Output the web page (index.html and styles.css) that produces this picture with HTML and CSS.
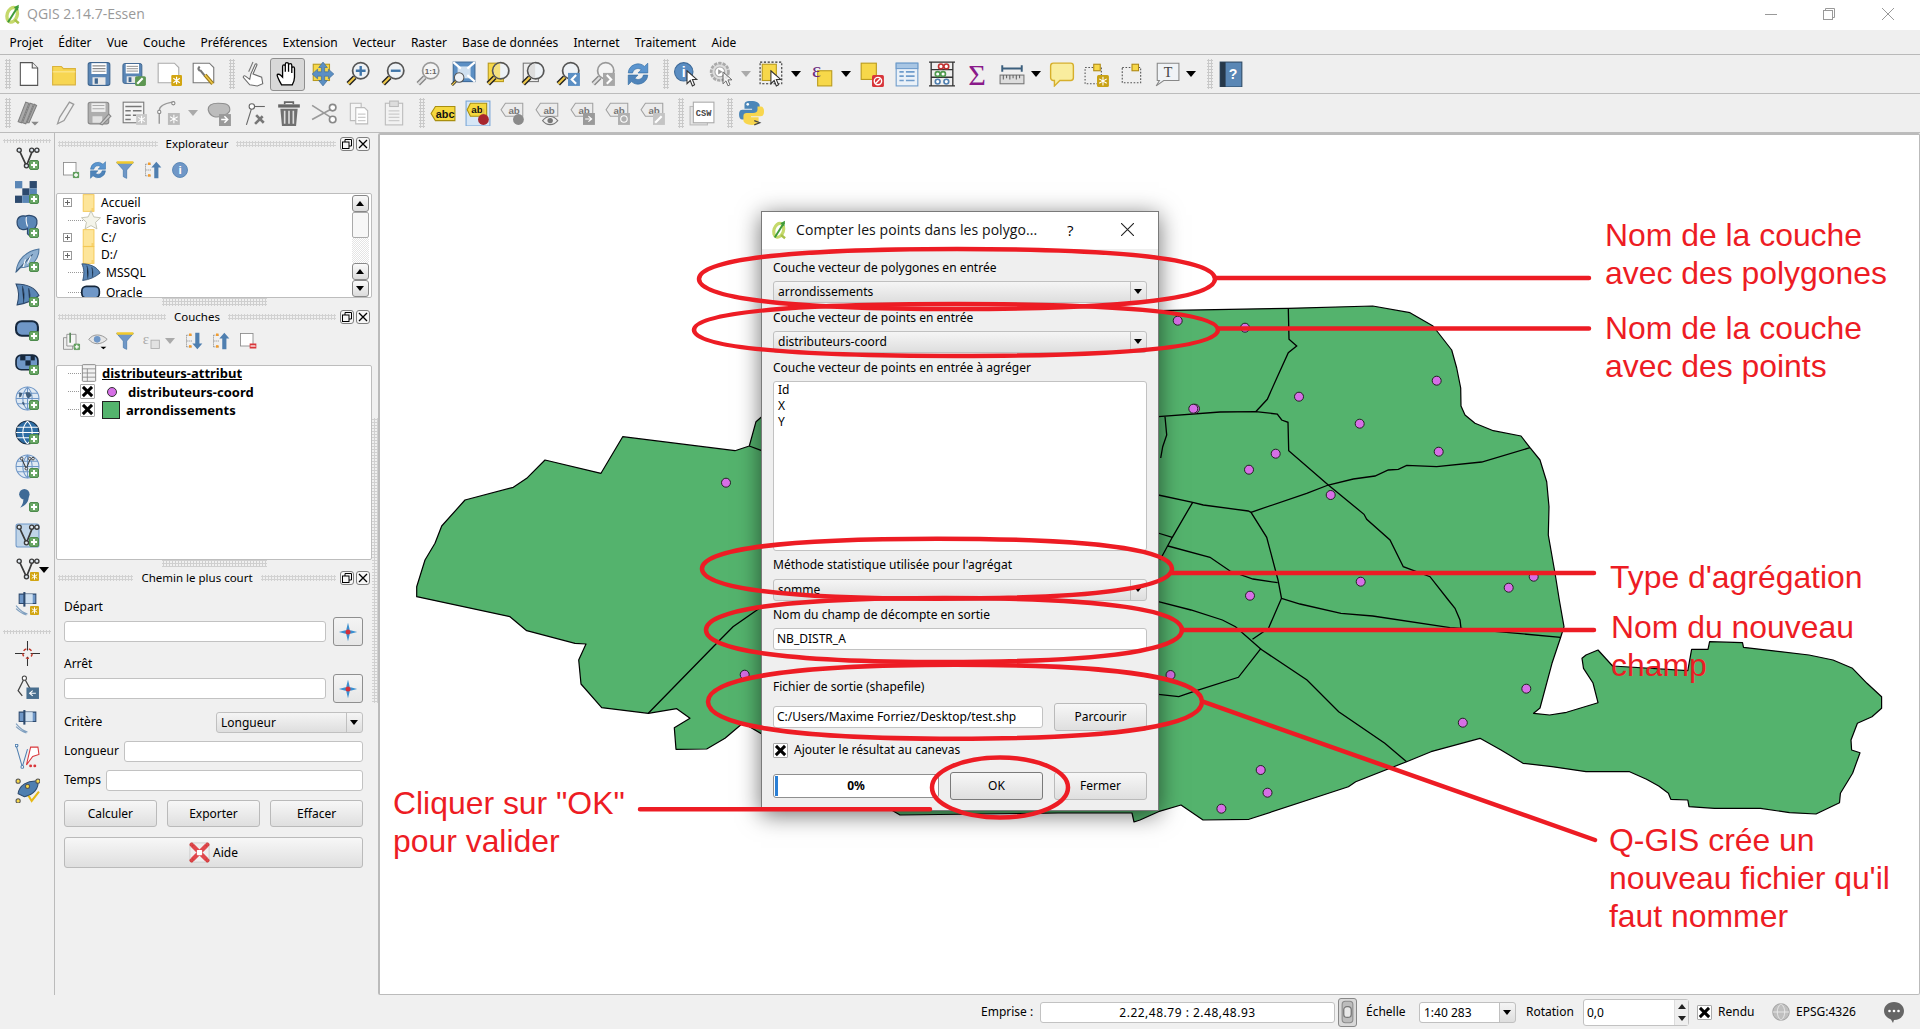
FILE: index.html
```html
<!DOCTYPE html>
<html lang="fr">
<head>
<meta charset="utf-8">
<title>QGIS 2.14.7-Essen</title>
<link rel="stylesheet" href="styles.css">
</head>
<body>
<svg class="defs" width="0" height="0">
<defs>
<symbol id="qgis" viewBox="0 0 24 24"><ellipse cx="11" cy="13" rx="6" ry="9" fill="none" stroke="#c5d96b" stroke-width="4" transform="rotate(18 11 13)"/><path d="M6 22 18 3" stroke="#3f9b3a" stroke-width="2.4"/><path d="M19 1l-1 7-5-4z" fill="#3f9b3a"/><path d="M14 19l5 4" stroke="#a9c24a" stroke-width="3"/></symbol>
<symbol id="mag" viewBox="0 0 24 24"><path d="M9 15 3 21" stroke="#222" stroke-width="4.5"/><path d="M9 15 3 21" stroke="#eec84a" stroke-width="2"/><circle cx="14.5" cy="9" r="7.5" fill="#eef2f6" stroke="#555" stroke-width="1.6"/></symbol>
<symbol id="magg" viewBox="0 0 24 24"><path d="M9 15 3 21" stroke="#888" stroke-width="4.5"/><path d="M9 15 3 21" stroke="#ddd" stroke-width="2"/><circle cx="14.5" cy="9" r="7.5" fill="#f4f4f4" stroke="#999" stroke-width="1.6"/></symbol>
<symbol id="plus" viewBox="0 0 10 10"><rect x=".5" y=".5" width="9" height="9" rx="1.5" fill="#6aa766" stroke="#4c8a4c"/><path d="M5 2v6M2 5h6" stroke="#fff" stroke-width="2"/></symbol>
<symbol id="star8" viewBox="0 0 10 10"><rect width="10" height="10" rx="1" fill="#d2a512"/><path d="M5 1.5v7M2 3l6 4M8 3 2 7" stroke="#fff" stroke-width="1.1"/></symbol>
<symbol id="vv" viewBox="0 0 24 24"><path d="M4 4 11 19 17 4" fill="none" stroke="#3a3a3a" stroke-width="1.6"/><path d="M17 4h4" stroke="#3a3a3a" stroke-width="1.6"/><g fill="#dfe7ef" stroke="#3a3a3a" stroke-width="1.3"><circle cx="4" cy="4" r="2"/><circle cx="11" cy="19" r="2"/><circle cx="16" cy="4" r="2"/><circle cx="21" cy="4" r="2"/></g></symbol>
<symbol id="new" viewBox="0 0 24 24"><path d="M4 1.5h11l5 5v16H4z" fill="#fff" stroke="#555"/><path d="M15 1.5v5h5" fill="#eee" stroke="#555"/></symbol>
<symbol id="open" viewBox="0 0 24 24"><path d="M1.5 5h8l2 2h11v15h-21z" fill="#f7d652" stroke="#dab33b"/><path d="M1.5 10h21" stroke="#fbe89a"/></symbol>
<symbol id="save" viewBox="0 0 24 24"><rect x="2" y="1.5" width="20" height="21" rx="2" fill="#5a86b6" stroke="#3f668f"/><rect x="5" y="2" width="14" height="10" fill="#fff"/><path d="M6 4.5h12M6 7h12M6 9.5h12" stroke="#8b8b8b"/><rect x="6" y="15" width="12" height="7" fill="#e8e8e8"/><rect x="8" y="16" width="3" height="5" fill="#3f668f"/></symbol>
<symbol id="saveas" viewBox="0 0 24 24"><use href="#save" width="21" height="21" y="1"/><rect x="13" y="14" width="10" height="9" rx="1.5" fill="#5d9752"/><path d="M15 21l5-5" stroke="#fff" stroke-width="2"/></symbol>
<symbol id="comp" viewBox="0 0 24 24"><path d="M2 2h15l4 4v14H2z" fill="#fff" stroke="#aaa"/><use href="#star8" x="14" y="13" width="10" height="10"/></symbol>
<symbol id="compm" viewBox="0 0 24 24"><path d="M2 2h15l4 4v14H2z" fill="#fff" stroke="#777"/><path d="M8 5c-2 2-1 4 1 4l4 5" fill="none" stroke="#777" stroke-width="2"/><path d="M13 13l7 8" stroke="#9a7a1a" stroke-width="3.4"/><path d="M13 13l7 8" stroke="#f0c84a" stroke-width="1.4"/></symbol>
<symbol id="touch" viewBox="0 0 24 24"><path d="M10 12 14 3c1-1 2 0 1.5 1L12 12l8 3 1 6-5 2-7-1-6-7c0-1 1-2 2-1l4 3z" fill="#fff" stroke="#6b6b6b"/><path d="M12 1 8 10" stroke="#777"/></symbol>
<symbol id="pan" viewBox="0 0 24 24"><path d="M6 22C4 18 2 15 2 13c0-1 2-1 3 0l2 2V5c0-2 2.500-2 2.500 0v5V3c0-2 3-2 3 0v7V4c0-2 3-2 3 0v7V7c0-2 2.500-2 2.500 0v8c0 3-1 5-2 7z" fill="#fff" stroke="#000" stroke-width="1.2"/></symbol>
<symbol id="panto" viewBox="0 0 24 24"><rect x="3" y="3" width="15" height="15" fill="#f7d84a" stroke="#b99a1c"/><path d="M12 1l4 5h-2.500v4H17V7.500l5 4.500-5 4.500V14h-3.500v4H16l-4 5-4-5h2.500v-4H7v2.500L2 12l5-4.500V10h3.500V6H8z" fill="#5b8fc4" stroke="#3d6a99" stroke-width=".6"/></symbol>
<symbol id="zin" viewBox="0 0 24 24"><use href="#mag"/><path d="M14.500 4.500v9M10 9h9" stroke="#3e74a8" stroke-width="2.200"/></symbol>
<symbol id="zout" viewBox="0 0 24 24"><use href="#mag"/><path d="M10 9h9" stroke="#3e74a8" stroke-width="2.200"/></symbol>
<symbol id="z11" viewBox="0 0 24 24"><use href="#magg"/><text x="14.500" y="12" class="svt" font-size="7.500" fill="#666" text-anchor="middle">1:1</text></symbol>
<symbol id="zfull" viewBox="0 0 24 24"><rect x="3" y="1" width="20" height="18" fill="#5b8fc4" stroke="#3d6a99"/><path d="M7 5h12v11H7z" fill="#cfe0f0"/><use href="#mag" width="14" height="14" y="10"/><path d="M3 1l7 6M23 1l-7 6M23 19l-7-6" stroke="#fff" stroke-width="2"/></symbol>
<symbol id="zsel" viewBox="0 0 24 24"><rect x="3" y="2" width="14" height="17" fill="#f7d84a" stroke="#b99a1c"/><use href="#mag"/><path d="M8 9a7 7 0 0 1 6-7v14a7 7 0 0 1-6-7z" fill="#f7d84a" opacity=".7"/></symbol>
<symbol id="zlay" viewBox="0 0 24 24"><rect x="3" y="2" width="14" height="17" fill="#eee" stroke="#777"/><use href="#mag"/><path d="M8 9a7 7 0 0 1 6-7v14a7 7 0 0 1-6-7z" fill="#ddd"/></symbol>
<symbol id="zlast" viewBox="0 0 24 24"><use href="#mag"/><rect x="12" y="11" width="11" height="12" fill="#5b8fc4"/><path d="M19.500 13l-4 4 4 4" fill="none" stroke="#fff" stroke-width="2"/></symbol>
<symbol id="znext" viewBox="0 0 24 24"><use href="#magg"/><rect x="12" y="11" width="11" height="12" fill="#a7a7a7"/><path d="M15.500 13l4 4-4 4" fill="none" stroke="#fff" stroke-width="2"/></symbol>
<symbol id="refresh" viewBox="0 0 24 24"><path d="M3 11a9 9 0 0 1 15-6l3-3v9h-9l3-3a5 5 0 0 0-8 3z" fill="#5b95cf" stroke="#2f6aa3" stroke-width=".6"/><path d="M21 13a9 9 0 0 1-15 6l-3 3v-9h9l-3 3a5 5 0 0 0 8-3z" fill="#4f84ba" stroke="#2f6aa3" stroke-width=".6"/></symbol>
<symbol id="curs" viewBox="0 0 12 16"><path d="M1 1v12l3-3 2 5 2-1-2-5h4z" fill="#fff" stroke="#333" stroke-width="1"/></symbol>
<symbol id="ident" viewBox="0 0 24 24"><circle cx="9" cy="10" r="8.500" fill="#5a8dc2" stroke="#3d6a99"/><text x="9" y="15" class="svb" font-size="13" fill="#fff" text-anchor="middle">i</text><use href="#curs" x="11" y="8" width="12" height="16"/></symbol>
<symbol id="action" viewBox="0 0 24 24"><circle cx="10" cy="10" r="8" fill="#ddd" stroke="#aaa" stroke-width="2.500" stroke-dasharray="3 1"/><circle cx="10" cy="10" r="4.500" fill="#fff" stroke="#aaa"/><path d="M8.500 7.500v5l4-2.500z" fill="#999"/><use href="#curs" x="12" y="9" width="11" height="15" opacity=".7"/></symbol>
<symbol id="sel" viewBox="0 0 24 24"><rect x="1" y="1" width="20" height="20" fill="none" stroke="#333" stroke-dasharray="2 1.500"/><rect x="3" y="3" width="13" height="15" fill="#f7d84a" stroke="#b99a1c"/><use href="#curs" x="10" y="8" width="12" height="16"/></symbol>
<symbol id="exps" viewBox="0 0 24 24"><rect x="8" y="9" width="13" height="14" fill="#f7d84a" stroke="#b99a1c"/><text x="7" y="15" class="svs" font-size="20" fill="#6b2b7f" text-anchor="middle">ε</text></symbol>
<symbol id="desel" viewBox="0 0 24 24"><rect x="2" y="2" width="14" height="15" fill="#f7d84a" stroke="#b99a1c"/><rect x="12" y="13" width="11" height="11" rx="1.500" fill="#d8353a"/><circle cx="17.500" cy="18.500" r="3.400" fill="none" stroke="#fff" stroke-width="1.300"/><path d="M15 21l5-5" stroke="#fff" stroke-width="1.300"/></symbol>
<symbol id="attr" viewBox="0 0 24 24"><rect x="2" y="2" width="20" height="21" fill="#eaf1f8" stroke="#6f9ccb"/><rect x="2" y="2" width="20" height="5" fill="#a8c6e4" stroke="#6f9ccb"/><path d="M5 10h4M11 10h8M5 14h4M11 14h8M5 18h4M11 18h8" stroke="#6f9ccb" stroke-width="1.500"/></symbol>
<symbol id="abacus" viewBox="0 0 24 24"><path d="M2 23V1M22 23V1M0 1h24M0 23h24M2 8h20M2 15h20" stroke="#333" fill="none" stroke-width="1.200"/><g fill="#fff" stroke="#c23232" stroke-width="1.500"><circle cx="11" cy="5" r="2.200"/><circle cx="16" cy="5" r="2.200"/></g><g fill="#fff" stroke="#4f9a4f" stroke-width="1.500"><circle cx="8" cy="12" r="2.200"/><circle cx="13" cy="12" r="2.200"/></g><g fill="#fff" stroke="#4f7fb0" stroke-width="1.500"><circle cx="8" cy="19" r="2.200"/><circle cx="16" cy="19" r="2.200"/></g></symbol>
<symbol id="sigma" viewBox="0 0 24 24"><text x="12" y="22" class="svs" font-size="28" fill="#8a1a8a" text-anchor="middle">Σ</text></symbol>
<symbol id="measure" viewBox="0 0 24 24"><path d="M3 7h18M3 4v6M21 4v6" stroke="#3c5f7d" stroke-width="1.800"/><rect x="1" y="13" width="22" height="8" fill="#ddd" stroke="#777"/><path d="M4 13v4M7 13v3M10 13v4M13 13v3M16 13v4M19 13v3" stroke="#666"/></symbol>
<symbol id="tip" viewBox="0 0 24 24"><path d="M4 2h16a2.500 2.500 0 0 1 2.500 2.500v11A2.500 2.500 0 0 1 20 18H10l-5 5v-5H4a2.500 2.500 0 0 1-2.500-2.500v-11A2.500 2.500 0 0 1 4 2z" fill="#f9ed9e" stroke="#d6af2c" stroke-width="1.300"/></symbol>
<symbol id="annot" viewBox="0 0 24 24"><rect x="1" y="6" width="15" height="15" fill="none" stroke="#555" stroke-dasharray="1.500 1.500"/><rect x="9" y="3" width="6" height="6" fill="#f7d84a" stroke="#b08a14"/><rect x="12" y="13" width="11" height="11" rx="1.500" fill="#c9a215"/><path d="M17.500 14.500v8M14 16.500l7 4M21 16.500l-7 4" stroke="#fff" stroke-width="1"/></symbol>
<symbol id="annot2" viewBox="0 0 24 24"><rect x="3" y="6" width="17" height="14" fill="none" stroke="#555" stroke-dasharray="1.500 1.500"/><rect x="12" y="3" width="6" height="6" fill="#f7d84a" stroke="#b08a14"/></symbol>
<symbol id="texta" viewBox="0 0 24 24"><path d="M3 2h20v16H9l-7 5 3-5H3z" fill="#f0f3f6" stroke="#888"/><text x="13" y="15" class="svs" font-size="13" fill="#444" text-anchor="middle">T</text></symbol>
<symbol id="help" viewBox="0 0 24 24"><rect x="2" y="1" width="20" height="23" fill="#5a87b5" stroke="#2e4a66"/><rect x="2" y="1" width="5" height="23" fill="#26384a"/><text x="14" y="17" class="svb" font-size="13" fill="#fff" text-anchor="middle">?</text></symbol>
<symbol id="digit" viewBox="0 0 24 24"><g fill="#a8a8a8" stroke="#7f7f7f"><path d="M2 20 9 2l3 1-7 18z"/><path d="M6 21 13 3l3 1-7 18z"/><path d="M10 21 17 4l2 1-7 16z"/></g><path d="M14 20h7l-3.500 3.500z" fill="#888"/></symbol>
<symbol id="pencil" viewBox="0 0 24 24"><path d="M6 22 8 16 17 2l4 2-9 15z" fill="#f0f0f0" stroke="#9b9b9b" stroke-width="1.200"/></symbol>
<symbol id="savee" viewBox="0 0 24 24"><rect x="2" y="2" width="19" height="20" rx="2" fill="#aeaeae" stroke="#888"/><rect x="5" y="3" width="13" height="8" fill="#eee"/><path d="M6 5h11M6 8h11" stroke="#aaa"/><rect x="6" y="15" width="9" height="6" fill="#e2e2e2"/><path d="M13 22l8-9 2 2-8 8z" fill="#ccc" stroke="#888"/></symbol>
<symbol id="attre" viewBox="0 0 24 24"><rect x="2" y="2" width="19" height="19" fill="#f4f4f4" stroke="#777"/><path d="M4 6h15M4 10h5M11 10h8M4 14h5M11 14h3M4 18h5" stroke="#777" stroke-width="1.400"/><rect x="14" y="13" width="10" height="10" fill="#c9c9c9"/><path d="M19 14.500v7M16 16l6 4M22 16l-6 4" stroke="#fff"/></symbol>
<symbol id="nodeg" viewBox="0 0 24 24"><path d="M3 22V10Q3 4 15 2" fill="none" stroke="#999" stroke-width="1.300"/><circle cx="3" cy="11" r="1.500" fill="#fff" stroke="#888"/><circle cx="16" cy="3" r="1.500" fill="#fff" stroke="#888"/><rect x="11" y="12" width="11" height="11" fill="#bbb"/><path d="M16.500 13.500v8M13 15.500l7 4M20 15.500l-7 4" stroke="#fff"/></symbol>
<symbol id="moveg" viewBox="0 0 24 24"><path d="M2 9c0-5 4-6 9-6s11 0 11 6c0 4-4 4-8 6-3 1-10 2-12-6z" fill="#bcbcbc" stroke="#8f8f8f"/><rect x="12" y="13" width="11" height="11" fill="#9a9a9a"/><path d="M14 18h5M17 15l3 3-3 3" stroke="#fff" fill="none" stroke-width="1.400"/></symbol>
<symbol id="nodet" viewBox="0 0 24 24"><path d="M5 23 10 7" stroke="#666"/><circle cx="10" cy="6" r="2.500" fill="#fff" stroke="#666"/><path d="M12 6h10" stroke="#666"/><path d="M13 22l7-7M14 14l7 7" stroke="#777" stroke-width="2.400"/></symbol>
<symbol id="trash" viewBox="0 0 24 24"><path d="M8 4V2h8v2" fill="none" stroke="#666" stroke-width="1.500"/><rect x="2" y="4" width="20" height="3" fill="#666"/><path d="M4 8h16l-1.500 16h-13z" fill="#707070"/><path d="M8 10v12M12 10v12M16 10v12" stroke="#ddd" stroke-width="1.500"/></symbol>
<symbol id="sciss" viewBox="0 0 24 24"><path d="M1 5 23 19M1 18 23 6" stroke="#9a9a9a" stroke-width="1.500"/><circle cx="20" cy="7" r="3" fill="#fff" stroke="#888" stroke-width="1.500"/><circle cx="20" cy="18" r="3" fill="#fff" stroke="#888" stroke-width="1.500"/></symbol>
<symbol id="copy" viewBox="0 0 24 24"><path d="M4 3h10v16H4z" fill="#f6f6f6" stroke="#bbb"/><path d="M9 7h8l3 3v12H9z" fill="#fff" stroke="#bbb"/><path d="M11 13h7M11 16h7M11 19h7" stroke="#ccc"/></symbol>
<symbol id="paste" viewBox="0 0 24 24"><rect x="4" y="3" width="16" height="20" fill="#f2f2f2" stroke="#bbb"/><rect x="8" y="1" width="8" height="5" fill="#ddd" stroke="#bbb"/><path d="M7 10h10M7 13h10M7 16h10M7 19h10" stroke="#ccc"/></symbol>
<symbol id="lab" viewBox="0 0 24 24"><path d="M5 6h18v13H5L1 12.500z" fill="#f5d83e" stroke="#a98f0f"/><text x="14" y="16.500" class="svb" font-size="10" fill="#111" text-anchor="middle">abc</text></symbol>
<symbol id="labp" viewBox="0 0 24 24"><rect x="1" y="1" width="22" height="23" fill="#d6e6f6" stroke="#7aa7d8"/><path d="M5 3h15v12H5L2 9z" fill="#f5d83e" stroke="#a98f0f"/><text x="11" y="12" class="svb" font-size="9" fill="#111" text-anchor="middle">ab</text><circle cx="17" cy="18" r="5" fill="#a8262e"/><path d="M17 13V8" stroke="#e0c04a" stroke-width="2"/></symbol>
<symbol id="labg" viewBox="0 0 24 24"><path d="M5 3h16v12H5L1 9z" fill="#ececec" stroke="#a2a2a2"/><text x="13" y="12.500" class="svb" font-size="9" fill="#777" text-anchor="middle">ab</text></symbol>
<symbol id="labg1" viewBox="0 0 24 24"><use href="#labg"/><circle cx="17" cy="18" r="5" fill="#8a8a8a"/></symbol>
<symbol id="labg2" viewBox="0 0 24 24"><use href="#labg"/><path d="M7 19c4-5 10-5 14 0-4 5-10 5-14 0z" fill="#eee" stroke="#777"/><circle cx="14" cy="19" r="2.500" fill="#777"/></symbol>
<symbol id="labg3" viewBox="0 0 24 24"><use href="#labg"/><rect x="12" y="12" width="11" height="11" fill="#9a9a9a"/><path d="M14 17.500h5M17 15l3 2.500-3 2.500" stroke="#fff" fill="none"/></symbol>
<symbol id="labg4" viewBox="0 0 24 24"><use href="#labg"/><rect x="12" y="12" width="11" height="11" fill="#b0b0b0"/><circle cx="17.500" cy="17.500" r="3" fill="none" stroke="#fff"/></symbol>
<symbol id="labg5" viewBox="0 0 24 24"><use href="#labg"/><rect x="12" y="12" width="11" height="11" fill="#c4c4c4"/><path d="M14 21l6-6" stroke="#fff" stroke-width="2"/></symbol>
<symbol id="csw" viewBox="0 0 24 24"><rect x="1" y="6" width="16" height="17" fill="#e6e6e6" stroke="#bbb"/><rect x="4" y="2" width="19" height="19" fill="#fff" stroke="#aaa"/><text x="13.500" y="15" class="svm" font-size="8" fill="#444" text-anchor="middle">CSW</text></symbol>
<symbol id="python" viewBox="0 0 24 24"><path d="M12 1C6 1 6 3 6 5v3h7v1H4c-3 0-3 3-3 5s1 4 3 4h3v-3c0-2 2-3 4-3h6c2 0 3-1 3-3V5c0-2-3-4-8-4z" fill="#4b86b8"/><path d="M13 23c6 0 6-2 6-4v-3h-7v-1h9c3 0 3-3 3-5s-1-4-3-4h-3v3c0 2-2 3-4 3H8c-2 0-3 1-3 3v4c0 2 3 4 8 4z" fill="#f8d64e"/><circle cx="9" cy="4" r="1.200" fill="#fff"/><path d="M15 19l5 2-5 2" fill="none" stroke="#444" stroke-width="1.200"/></symbol>
<symbol id="r-raster" viewBox="0 0 24 24"><g fill="#5a86b6"><rect x="0" y="1" width="7" height="7"/><rect x="14" y="1" width="7" height="7" fill="#2d4a6e"/><rect x="7" y="8" width="7" height="7" fill="#2d4a6e"/><rect x="14" y="8" width="7" height="7"/><rect x="0" y="15" width="7" height="7" fill="#2d4a6e"/><rect x="7" y="15" width="7" height="7"/></g></symbol>
<symbol id="r-pg" viewBox="0 0 24 24"><path d="M2 8c0-5 4-7 8-6 3-1 10-1 11 4 1 6-3 9-5 9v4c0 2-3 2-4 0v-5c-3 2-8 1-9-2-1-1-1-2-1-4z" fill="#5a86b6" stroke="#2d4a6e" stroke-width="1.200"/><path d="M11 3c-1 3 0 6 1 9" fill="none" stroke="#fff"/></symbol>
<symbol id="r-spat" viewBox="0 0 24 24"><path d="M1 23C2 12 10 3 23 1c0 8-5 18-18 18z" fill="#8fb0d1" stroke="#4e769f"/><path d="M1 23 17 6" stroke="#39597a"/><path d="M12 15l3-7M8 18l2-7" stroke="#fff"/></symbol>
<symbol id="r-ms" viewBox="0 0 24 24"><path d="M1 1c9 0 18 3 22 11-6 5-13 8-21 9 2-7 2-14-1-20z" fill="#5a86b6" stroke="#2d4a6e"/><path d="M7 3c2 5 2 11 1 16M13 5c1.500 4 1.500 9 .5 12" stroke="#2d4a6e"/></symbol>
<symbol id="r-ora" viewBox="0 0 24 24"><rect x="1" y="4" width="21" height="14" rx="5.500" fill="#6f97c7" stroke="#16283d" stroke-width="2"/></symbol>
<symbol id="r-db2" viewBox="0 0 24 24"><rect x="1" y="4" width="21" height="14" rx="5" fill="#6f97c7" stroke="#16283d" stroke-width="1.600"/><rect x="5" y="4" width="5" height="5" fill="#16283d"/><rect x="10" y="9" width="5" height="5" fill="#16283d"/><rect x="15" y="4" width="4" height="5" fill="#16283d"/></symbol>
<symbol id="r-globe" viewBox="0 0 24 24"><circle cx="12" cy="12" r="11" fill="#dfe9f3" stroke="#6f97c7"/><path d="M1 12h22M2 7h20M2 17h20M12 1c-6 6-6 16 0 22M12 1c6 6 6 16 0 22M12 1v22" stroke="#6f97c7" fill="none"/></symbol>
<symbol id="r-globe2" viewBox="0 0 24 24"><use href="#r-globe"/><path d="M4 6l3 1-1 3-2 1zM10 6h4l2 3-3 3-2-2zM15 14l3 1-1 3-2-1zM7 15l2 1v3l-2-2z" fill="#3e5c7a"/></symbol>
<symbol id="r-globeb" viewBox="0 0 24 24"><circle cx="12" cy="12" r="11" fill="#2e6da4" stroke="#16283d"/><path d="M1 12h22M2 7h20M2 17h20M12 1c-6 6-6 16 0 22M12 1c6 6 6 16 0 22" stroke="#fff" fill="none"/></symbol>
<symbol id="r-comma" viewBox="0 0 24 24"><circle cx="9" cy="6" r="5" fill="#3f6a96"/><path d="M13 7c1 6-3 10-8 12 2-3 3-5 3-8z" fill="#3f6a96"/></symbol>
<symbol id="r-poly" viewBox="0 0 24 24"><rect x="1" y="1" width="22" height="22" rx="2" fill="#bfd4e8" stroke="#6f97c7"/><use href="#vv"/></symbol>
<symbol id="r-cols" viewBox="0 0 24 24"><path d="M4 3h16v9H4z" fill="#6f97c7" stroke="#2d4a6e"/><rect x="9" y="3" width="8" height="9" fill="#cfe0f0"/><path d="M9 1v14" stroke="#2d4a6e" stroke-width="2"/><path d="M1 14c4 5 7 7 11 8M1 17c3 3 6 5 10 6" stroke="#7f9fbf" fill="none"/></symbol>
<symbol id="r-cross" viewBox="0 0 24 24"><path d="M12 0v9M12 15v9M0 12h9M15 12h9" stroke="#333"/><circle cx="12" cy="12" r="4.500" fill="none" stroke="#c0392b" stroke-width="1.400" stroke-dasharray="3 2.500"/></symbol>
<symbol id="r-comp" viewBox="0 0 24 24"><circle cx="9" cy="3" r="2" fill="#fff" stroke="#444"/><path d="M8 5 3 15l4 5M10 5l5 9" fill="none" stroke="#444" stroke-width="1.200"/><rect x="11" y="12" width="12" height="11" fill="#496f8f"/><path d="M20 17.500h-5M17 15l-3 2.500 3 2.500" stroke="#fff" fill="none"/></symbol>
<symbol id="r-topo" viewBox="0 0 24 24"><path d="M1 1 7 22M7 22 12 5" fill="none" stroke="#4f7fb0"/><path d="M11 20 15 3h7l1 7-6 2z" fill="#fff" stroke="#d9363a"/><g fill="#fff" stroke="#4f7fb0"><circle cx="1.500" cy="1.500" r="1.300"/><circle cx="7" cy="22" r="1.300"/></g><circle cx="15" cy="21" r="1.400" fill="#d9363a"/><circle cx="19" cy="21" r="1.400" fill="#d9363a"/></symbol>
<symbol id="r-check" viewBox="0 0 24 24"><path d="M3 15C4 7 12 2 22 3c1 7-4 13-13 15z" fill="#4f7fb0" stroke="#2d4a6e"/><g fill="#f7d84a" stroke="#555"><circle cx="3" cy="3" r="2"/><circle cx="12" cy="8" r="2"/><circle cx="22" cy="3" r="2"/><circle cx="3" cy="22" r="2"/></g><path d="M13 17l3 5 7-9" fill="none" stroke="#e6b916" stroke-width="2"/></symbol>
<symbol id="pick" viewBox="0 0 24 24"><path d="M12 1l2 8-2 3-2-3zM12 23l2-8-2-3-2 3zM1 12l8-2 3 2-3 2zM23 12l-8-2-3 2 3 2z" fill="#3a8fd0"/><circle cx="12" cy="12" r="3" fill="#d32f3a"/></symbol>
<symbol id="lifebuoy" viewBox="0 0 24 24"><rect x="1" y="1" width="22" height="22" rx="3" fill="#eee" stroke="#ccc"/><path d="M4 4l16 16M20 4 4 20" stroke="#e0474c" stroke-width="5"/><path d="M9 12h6M12 9v6" stroke="#fff" stroke-width="5"/><g fill="#e0474c" stroke="#c33"><circle cx="3" cy="3" r="2"/><circle cx="21" cy="3" r="2"/><circle cx="3" cy="21" r="2"/><circle cx="21" cy="21" r="2"/></g></symbol>
<symbol id="star" viewBox="0 0 24 24"><path d="M12 1l3.400 7.300 8 1-5.900 5.500 1.600 7.900L12 18.700l-7.100 4 1.600-7.900L.6 9.300l8-1z" fill="#f4f4ea" stroke="#bcbca8"/></symbol>
<symbol id="eye" viewBox="0 0 24 24"><path d="M1 10c5-7 15-7 22 0-7 7-17 7-22 0z" fill="#e6e6e6" stroke="#888"/><circle cx="11" cy="10" r="4" fill="#6f97c7"/><path d="M15 19h7l-3.500 3z" fill="#000"/></symbol>
<symbol id="filter" viewBox="0 0 24 24"><path d="M2 3h20l-8 9v10l-4-2v-8z" fill="#6f97c7" stroke="#4f7fb0"/><path d="M2 3h20" stroke="#f0c92c" stroke-width="3"/></symbol>
<symbol id="coll" viewBox="0 0 24 24"><path d="M3 5h7M3 12h7M3 19h7M3 5v14" stroke="#888" stroke-dasharray="1.500 1" fill="none"/><rect x="6" y="3" width="3" height="3" fill="#f39c2c"/><rect x="6" y="17" width="3" height="3" fill="#f39c2c"/><path d="M16 2l6 7h-3.500v13h-5V9H10z" fill="#4f7fb0"/></symbol>
<symbol id="expd" viewBox="0 0 24 24"><path d="M3 5h7M3 12h7M3 19h7M3 5v14" stroke="#888" stroke-dasharray="1.500 1" fill="none"/><rect x="6" y="3" width="3" height="3" fill="#f39c2c"/><rect x="6" y="17" width="3" height="3" fill="#f39c2c"/><path d="M16 22l6-7h-3.500V2h-5v13H10z" fill="#4f7fb0"/></symbol>
<symbol id="info" viewBox="0 0 24 24"><circle cx="12" cy="12" r="9" fill="#6f97c7" stroke="#4f7fb0"/><text x="12" y="17" class="svb" font-size="14" fill="#fff" text-anchor="middle">i</text></symbol>
<symbol id="addg" viewBox="0 0 24 24"><rect x="3" y="3" width="15" height="15" fill="#fff" stroke="#888"/><use href="#plus" x="14" y="14" width="8" height="8"/></symbol>
<symbol id="remg" viewBox="0 0 24 24"><rect x="3" y="3" width="15" height="15" fill="#fff" stroke="#888"/><rect x="14" y="15" width="8" height="6" fill="#d9363a"/><path d="M15 18h6" stroke="#fff" stroke-width="1.500"/></symbol>
<symbol id="addl" viewBox="0 0 24 24"><path d="M3 8h11v14H3z" fill="#eee" stroke="#888"/><path d="M7 4h11v14H7z" fill="#f6f6f6" stroke="#888"/><path d="M11 2v12" stroke="#5d8a5d" stroke-width="2"/><use href="#plus" x="15" y="15" width="8" height="8"/></symbol>
<symbol id="expg" viewBox="0 0 24 24"><text x="6" y="15" class="svs" font-size="18" fill="#aaa" text-anchor="middle">ε</text><rect x="12" y="11" width="10" height="10" fill="#e2e2e2" stroke="#aaa"/></symbol>
<symbol id="tbl" viewBox="0 0 24 24"><rect x="4" y="2" width="16" height="20" rx="1" fill="#f2f2f2" stroke="#777"/><path d="M4 7h16M4 12h16M4 17h16M10 7v15" stroke="#888"/></symbol>
<symbol id="folder" viewBox="0 0 24 24"><rect x="5" y="2" width="13" height="20" fill="#fde59a" stroke="#f2c34a"/><rect x="15" y="18" width="3" height="4" fill="#f8d26c"/></symbol>
<symbol id="lock" viewBox="0 0 14 22"><rect x="2" y="1" width="10" height="20" rx="3" fill="#bcbcbc" stroke="#8a8a8a"/><rect x="3.500" y="6" width="7" height="10" rx="3" fill="#e8e8e8" stroke="#777" stroke-width="1.200"/></symbol>
<symbol id="earth" viewBox="0 0 24 24"><circle cx="12" cy="12" r="10" fill="#bfbfbf" stroke="#999"/><path d="M2 12h20M12 2c-6 5-6 15 0 20M12 2c6 5 6 15 0 20" stroke="#eee" fill="none"/></symbol>
<symbol id="msg" viewBox="0 0 24 24"><path d="M12 2c6 0 10 4 10 9s-4 9-10 9l-1 3-2-3.500C5 18 2 15 2 11c0-5 4-9 10-9z" fill="#666"/><circle cx="7.500" cy="11" r="1.300" fill="#fff"/><circle cx="12" cy="11" r="1.300" fill="#fff"/><circle cx="16.500" cy="11" r="1.300" fill="#fff"/></symbol>
</defs>
</svg>

<header class="titlebar">
  <div class="title-left"><svg class="app-ico"><use href="#qgis"/></svg><span class="app-title">QGIS 2.14.7-Essen</span></div>
  <div class="winctl">
    <span class="winbtn"><svg class="w12" viewBox="0 0 12 12"><path d="M0 6.500h12" stroke="#999"/></svg></span>
    <span class="winbtn"><svg class="w12" viewBox="0 0 12 12"><rect x=".5" y="2.500" width="9" height="9" fill="#fff" stroke="#999"/><path d="M2.500 2.500v-2h9v9h-2" fill="none" stroke="#999"/></svg></span>
    <span class="winbtn"><svg class="w12" viewBox="0 0 12 12"><path d="M0 0l12 12M12 0 0 12" stroke="#999"/></svg></span>
  </div>
</header>

<nav class="menubar">
  <span class="mi">Projet</span><span class="mi">Éditer</span><span class="mi">Vue</span><span class="mi">Couche</span><span class="mi">Préférences</span><span class="mi">Extension</span><span class="mi">Vecteur</span><span class="mi">Raster</span><span class="mi">Base de données</span><span class="mi">Internet</span><span class="mi">Traitement</span><span class="mi">Aide</span>
</nav>

<div class="toolbar">
  <i class="grip first"></i>
  <span class="t"><svg><use href="#new"/></svg></span><span class="t"><svg><use href="#open"/></svg></span><span class="t"><svg><use href="#save"/></svg></span><span class="t"><svg><use href="#saveas"/></svg></span><span class="t"><svg><use href="#comp"/></svg></span><span class="t"><svg><use href="#compm"/></svg></span>
  <i class="grip"></i>
  <span class="t"><svg><use href="#touch"/></svg></span><span class="t on"><svg><use href="#pan"/></svg></span><span class="t"><svg><use href="#panto"/></svg></span><span class="t"><svg><use href="#zin"/></svg></span><span class="t"><svg><use href="#zout"/></svg></span><span class="t"><svg><use href="#z11"/></svg></span><span class="t"><svg><use href="#zfull"/></svg></span><span class="t"><svg><use href="#zsel"/></svg></span><span class="t"><svg><use href="#zlay"/></svg></span><span class="t"><svg><use href="#zlast"/></svg></span><span class="t"><svg><use href="#znext"/></svg></span><span class="t"><svg><use href="#refresh"/></svg></span>
  <i class="grip"></i>
  <span class="t"><svg><use href="#ident"/></svg></span><span class="t"><svg><use href="#action"/></svg></span><b class="arr dis"></b><span class="t"><svg><use href="#sel"/></svg></span><b class="arr"></b><span class="t"><svg><use href="#exps"/></svg></span><b class="arr"></b><span class="t"><svg><use href="#desel"/></svg></span><span class="t"><svg><use href="#attr"/></svg></span><span class="t"><svg><use href="#abacus"/></svg></span><span class="t"><svg><use href="#sigma"/></svg></span><span class="t"><svg><use href="#measure"/></svg></span><b class="arr"></b><span class="t"><svg><use href="#tip"/></svg></span><span class="t"><svg><use href="#annot"/></svg></span><span class="t"><svg><use href="#annot2"/></svg></span><span class="t"><svg><use href="#texta"/></svg></span><b class="arr"></b>
  <i class="grip"></i>
  <span class="t"><svg><use href="#help"/></svg></span>
</div>

<div class="toolbar">
  <i class="grip first"></i>
  <span class="t"><svg><use href="#digit"/></svg></span><span class="t"><svg><use href="#pencil"/></svg></span><span class="t"><svg><use href="#savee"/></svg></span><span class="t"><svg><use href="#attre"/></svg></span><span class="t"><svg><use href="#nodeg"/></svg></span><b class="arr dis"></b><span class="t"><svg><use href="#moveg"/></svg></span><span class="t"><svg><use href="#nodet"/></svg></span><span class="t"><svg><use href="#trash"/></svg></span><span class="t"><svg><use href="#sciss"/></svg></span><span class="t"><svg><use href="#copy"/></svg></span><span class="t"><svg><use href="#paste"/></svg></span>
  <i class="grip"></i>
  <span class="t"><svg><use href="#lab"/></svg></span><span class="t"><svg><use href="#labp"/></svg></span><span class="t"><svg><use href="#labg1"/></svg></span><span class="t"><svg><use href="#labg2"/></svg></span><span class="t"><svg><use href="#labg3"/></svg></span><span class="t"><svg><use href="#labg4"/></svg></span><span class="t"><svg><use href="#labg5"/></svg></span>
  <i class="grip"></i>
  <span class="t"><svg><use href="#csw"/></svg></span>
  <i class="grip"></i>
  <span class="t"><svg><use href="#python"/></svg></span>
</div>

<main class="main">
  <aside class="strip">
    <i class="hgrip top"></i>
    <span class="s"><svg><use href="#vv"/><use href="#plus" x="14" y="14" width="10" height="10"/></svg></span>
    <span class="s"><svg><use href="#r-raster"/><use href="#plus" x="14" y="14" width="10" height="10"/></svg></span>
    <span class="s"><svg><use href="#r-pg"/><use href="#plus" x="14" y="14" width="10" height="10"/></svg></span>
    <span class="s"><svg><use href="#r-spat"/><use href="#plus" x="14" y="14" width="10" height="10"/></svg></span>
    <span class="s"><svg><use href="#r-ms"/><use href="#plus" x="14" y="14" width="10" height="10"/></svg></span>
    <span class="s"><svg><use href="#r-ora"/><use href="#plus" x="14" y="14" width="10" height="10"/></svg></span>
    <span class="s"><svg><use href="#r-db2"/><use href="#plus" x="14" y="14" width="10" height="10"/></svg></span>
    <span class="s"><svg><use href="#r-globe2"/><use href="#plus" x="14" y="14" width="10" height="10"/></svg></span>
    <span class="s"><svg><use href="#r-globeb"/><use href="#plus" x="14" y="14" width="10" height="10"/></svg></span>
    <span class="s"><svg><use href="#r-globe"/><use href="#vv" x="4" y="2" width="16" height="16"/><use href="#plus" x="14" y="14" width="10" height="10"/></svg></span>
    <span class="s"><svg><use href="#r-comma"/><use href="#plus" x="14" y="14" width="10" height="10"/></svg></span>
    <span class="s"><svg><use href="#r-poly"/><use href="#plus" x="14" y="14" width="10" height="10"/></svg></span>
    <span class="s with-arr"><svg><use href="#vv"/><use href="#star8" x="15" y="15" width="9" height="9"/></svg><b class="arr abs"></b></span>
    <span class="s"><svg><use href="#r-cols"/><use href="#star8" x="15" y="15" width="9" height="9"/></svg></span>
    <i class="hgrip mid"></i>
    <span class="s"><svg><use href="#r-cross"/></svg></span>
    <span class="s"><svg><use href="#r-comp"/></svg></span>
    <span class="s"><svg><use href="#r-cols"/></svg></span>
    <span class="s"><svg><use href="#r-topo"/></svg></span>
    <span class="s"><svg><use href="#r-check"/></svg></span>
  </aside>

  <section class="docks">
    <div class="dock-head"><i class="dots"></i><span class="dock-title">Explorateur</span><i class="dots"></i><span class="dbtn"><svg viewBox="0 0 12 12"><rect x="1.500" y="4" width="6.500" height="6.500" fill="none" stroke="#000"/><path d="M4 4V1.500h6.500V8H8" fill="none" stroke="#000"/></svg></span><span class="dbtn"><svg viewBox="0 0 12 12"><path d="M2 2l8 8M10 2l-8 8" stroke="#000" stroke-width="1.300"/></svg></span></div>
    <div class="dock-tools"><span class="d"><svg><use href="#addg"/></svg></span><span class="d"><svg><use href="#refresh"/></svg></span><span class="d"><svg><use href="#filter"/></svg></span><span class="d"><svg><use href="#coll"/></svg></span><span class="d"><svg><use href="#info"/></svg></span></div>
    <div class="tree browser">
      <div class="tree-rows">
        <div class="row"><span class="exp"></span><svg class="ri"><use href="#folder"/></svg><span>Accueil</span></div>
        <div class="row"><span class="twig"></span><svg class="ri wide"><use href="#star"/></svg><span>Favoris</span></div>
        <div class="row"><span class="exp"></span><svg class="ri"><use href="#folder"/></svg><span>C:/</span></div>
        <div class="row"><span class="exp"></span><svg class="ri"><use href="#folder"/></svg><span>D:/</span></div>
        <div class="row"><span class="twig"></span><svg class="ri wide"><use href="#r-ms"/></svg><span>MSSQL</span></div>
        <div class="row last"><span class="twig"></span><svg class="ri wide"><use href="#r-ora"/></svg><span>Oracle</span></div>
      </div>
      <div class="vscroll">
        <span class="sb-btn up"></span><span class="sb-thumb"></span><span class="sb-track"></span><span class="sb-btn up"></span><span class="sb-btn down"></span>
      </div>
    </div>
    <i class="hgrip split"></i>
    <div class="dock-head"><i class="dots"></i><span class="dock-title">Couches</span><i class="dots"></i><span class="dbtn"><svg viewBox="0 0 12 12"><rect x="1.500" y="4" width="6.500" height="6.500" fill="none" stroke="#000"/><path d="M4 4V1.500h6.500V8H8" fill="none" stroke="#000"/></svg></span><span class="dbtn"><svg viewBox="0 0 12 12"><path d="M2 2l8 8M10 2l-8 8" stroke="#000" stroke-width="1.300"/></svg></span></div>
    <div class="dock-tools layers-tools"><span class="d"><svg><use href="#addl"/></svg></span><span class="d"><svg><use href="#eye"/></svg></span><span class="d"><svg><use href="#filter"/></svg></span><span class="d narrow"><svg><use href="#expg"/></svg></span><b class="arr dis small"></b><span class="d"><svg><use href="#expd"/></svg></span><span class="d"><svg><use href="#coll"/></svg></span><span class="d"><svg><use href="#remg"/></svg></span></div>
    <div class="tree layers">
      <div class="row lr"><span class="twig"></span><svg class="ri"><use href="#tbl"/></svg><span class="lname ul">distributeurs-attribut</span></div>
      <div class="row lr"><span class="twig"></span><span class="cbx"></span><span class="pt"></span><span class="lname c">distributeurs-coord</span></div>
      <div class="row lr"><span class="twig"></span><span class="cbx"></span><span class="sq"></span><span class="lname d2">arrondissements</span></div>
    </div>
    <i class="hgrip split second"></i>
    <div class="dock-head"><i class="dots"></i><span class="dock-title">Chemin le plus court</span><i class="dots"></i><span class="dbtn"><svg viewBox="0 0 12 12"><rect x="1.500" y="4" width="6.500" height="6.500" fill="none" stroke="#000"/><path d="M4 4V1.500h6.500V8H8" fill="none" stroke="#000"/></svg></span><span class="dbtn"><svg viewBox="0 0 12 12"><path d="M2 2l8 8M10 2l-8 8" stroke="#000" stroke-width="1.300"/></svg></span></div>
    <form class="route">
      <label class="rlab">Départ</label>
      <div class="rrow"><span class="inp grow"></span><span class="pickbtn"><svg><use href="#pick"/></svg></span></div>
      <label class="rlab two">Arrêt</label>
      <div class="rrow"><span class="inp grow"></span><span class="pickbtn"><svg><use href="#pick"/></svg></span></div>
      <div class="rline crit"><span>Critère</span><span class="combo rcombo"><span class="cval">Longueur</span><span class="cdrop"></span></span></div>
      <div class="rline"><span>Longueur</span><span class="inp grow"></span></div>
      <div class="rline"><span>Temps</span><span class="inp grow"></span></div>
      <div class="rbtns"><span class="btn">Calculer</span><span class="btn">Exporter</span><span class="btn">Effacer</span></div>
      <div class="btn wide-btn"><svg><use href="#lifebuoy"/></svg>Aide</div>
    </form>
  </section>
  <i class="vgrip"></i>

  <div class="canvas">
    <svg class="map" viewBox="380 135 1540 860" preserveAspectRatio="xMinYMin meet">
      <path class="land" d="M416.700 596.700 416.700 586.700 425 560 435 543.300 441.700 526 465 500 513.300 487.300 526.700 478.300 545 460 601 473.300 622.700 436.700 735 450.700 749.300 446 756 421.700 761.700 416.700 900 320 1126.700 310 1158 310.700 1288 308.300 1372.700 306 1410 312.700 1433 326 1451.700 350 1456.700 368 1460.700 388 1461 406 1465 415 1475 423.300 1493.300 430.700 1521 436 1530 447.700 1540 460 1546.700 481.700 1549 506.700 1548.300 535 1555 573 1559.300 600 1564 626.700 1560.700 637.300 1552 663.300 1540 708 1533.600 713.300 1549.600 715 1566.600 712.300 1598 702.700 1593 683 1583.500 668.300 1582 658.300 1586 655 1598 650 1612.600 666 1687.800 670.700 1691.600 649.300 1708 649.300 1709.600 641.700 1742.500 642.700 1743.500 647.300 1809 655 1833 660 1852.500 668.300 1867 683.300 1881.600 696.700 1881.600 708.300 1872 716.700 1857.400 723.300 1851 740 1851.600 750 1860 752.700 1852.600 773.300 1840.400 793.300 1839.500 802.700 1816 814 1789.500 812.700 1760.500 808.300 1714.400 808.300 1689 806.700 1687.800 800 1670.800 799.300 1668.400 793.300 1658.700 786 1646.500 779.300 1629.600 771.700 1586 771.700 1552 766.700 1523 763.300 1501 750 1480 738.300 1431 751.700 1406.600 761.700 1355.700 781.700 1348.400 786.700 1249 819.300 1203 820 1181 805 1158.400 811.700 1140 820 1134 822 1132 813 1058.600 813 900 815 743 723 725 738.300 706.700 749 676 749.300 674.300 727.700 690 718.300 676.700 708.700 648.300 713.300 601.700 707.700 581 684 578.700 660 586 644 575 643.300 526.700 630.700 510 616.700Z"/>
      <g class="borders">
        <path d="M1288.300 308.300 1289 339.300 1296.700 346 1288.300 352.700 1276.700 378.300 1267.300 399.300 1255.700 411.700"/>
        <path d="M1158.300 416.700 1220 412 1255.700 411.700 1277.300 414 1281.700 420 1288 422.300 1288.700 450.700 1328.300 485 1364 514.300 1366.700 519.300 1390 540 1403.300 566.700 1430 576.700 1448.300 600 1455 608.300 1460 620 1461 628.300"/>
        <path d="M1158.400 601.700 1191 610 1222.400 620 1235.500 626.700 1261 649.300 1307 680 1338.700 711.700 1384.800 743.300 1406.600 761.700"/>
        <path d="M1158 533 1172.300 537.300"/>
        <path d="M1168 546 1210 557.300 1230 571 1253 579 1277.700 582.700"/>
        <path d="M1192.700 502.300 1172.300 537.300 1160 560"/>
        <path d="M1158.300 495 1192.700 502.300 1203.300 505 1248.300 511 1251 512.300 1266.700 537.300 1268.300 543.300 1278 580 1281.500 598.300 1268.500 628.300 1252.500 639.300"/>
        <path d="M1251 512.300 1306.700 493.300 1328.300 485 1353.300 479 1375 476 1388.300 470 1398.300 469.300 1406.700 465.300 1436.700 466.700 1481.700 462 1530 447.700"/>
        <path d="M1165 416.700 1166.700 435 1162.700 446.700 1160.700 458"/>
        <path d="M1281.500 598.300 1300 604 1341 613.300 1372.700 616 1450 627.700 1461 628.300 1560.700 637.300"/>
        <path d="M1261 648.300 1238.400 677.300 1193.300 691.700 1178.800 696.700 1158.400 694.300"/>
        <path d="M648.300 713.300 716.700 643.300 733 626.700 761.700 606.700"/>
        <path d="M749.300 446 761.700 450.700"/>
      </g>
      <g class="pts">
        <circle cx="726" cy="482.700" r="4.500"/><circle cx="744.700" cy="674.700" r="4.500"/><circle cx="1177.700" cy="320.700" r="4.500"/><circle cx="1245" cy="327.700" r="4.500"/><circle cx="1195" cy="408.700" r="4.500"/><circle cx="1193.300" cy="408.700" r="4.500"/><circle cx="1299" cy="396.700" r="4.500"/><circle cx="1436.700" cy="380.700" r="4.500"/><circle cx="1359.700" cy="423.700" r="4.500"/><circle cx="1438.700" cy="451.700" r="4.500"/><circle cx="1275.700" cy="453.700" r="4.500"/><circle cx="1249" cy="469.700" r="4.500"/><circle cx="1330.700" cy="495" r="4.500"/><circle cx="1250" cy="595.700" r="4.500"/><circle cx="1360.700" cy="581.700" r="4.500"/><circle cx="1508.700" cy="587.700" r="4.500"/><circle cx="1533.700" cy="576.700" r="4.500"/><circle cx="1170.500" cy="675" r="4.500"/><circle cx="1526.300" cy="688.700" r="4.500"/><circle cx="1462.800" cy="722.700" r="4.500"/><circle cx="1260.700" cy="770" r="4.500"/><circle cx="1267.500" cy="792.700" r="4.500"/><circle cx="1221.400" cy="808.700" r="4.500"/>
      </g>
    </svg>
  </div>
</main>

<footer class="status">
  <span class="st-l emprise">Emprise :</span>
  <span class="inp st-ext">2.22,48.79 : 2.48,48.93</span>
  <span class="st-lock"><svg><use href="#lock"/></svg></span>
  <span class="st-l echelle">Échelle</span>
  <span class="combo st-scale"><span class="cval white">1:40 283</span><span class="cdrop"></span></span>
  <span class="st-l rot">Rotation</span>
  <span class="spin"><span class="spin-v">0,0</span><span class="spin-b"><b class="sb-a up"></b><b class="sb-a down"></b></span></span>
  <span class="cbx st-c"></span>
  <span class="st-l rendu">Rendu</span>
  <svg class="st-ico earth"><use href="#earth"/></svg>
  <span class="st-l epsg">EPSG:4326</span>
  <svg class="st-ico msg"><use href="#msg"/></svg>
</footer>

<div class="dialog">
  <div class="dlg-title">
    <svg class="dlg-ico"><use href="#qgis"/></svg>
    <span class="dlg-name">Compter les points dans les polygo...</span>
    <span class="dlg-help">?</span>
    <svg class="dlg-x" viewBox="0 0 12 12"><path d="M0 0l12 12M12 0 0 12" stroke="#222"/></svg>
  </div>
  <div class="dlg-body">
    <div class="dl first">Couche vecteur de polygones en entrée</div>
    <div class="combo dc"><span class="cval">arrondissements</span><span class="cdrop"></span></div>
    <div class="dl">Couche vecteur de points en entrée</div>
    <div class="combo dc"><span class="cval">distributeurs-coord</span><span class="cdrop"></span></div>
    <div class="dl">Couche vecteur de points en entrée à agréger</div>
    <div class="list"><div>Id</div><div>X</div><div>Y</div></div>
    <div class="dl l4">Méthode statistique utilisée pour l'agrégat</div>
    <div class="combo dc"><span class="cval">somme</span><span class="cdrop"></span></div>
    <div class="dl l5">Nom du champ de décompte en sortie</div>
    <div class="inp di">NB_DISTR_A</div>
    <div class="dl l6">Fichier de sortie (shapefile)</div>
    <div class="file-row"><span class="inp di file">C:/Users/Maxime Forriez/Desktop/test.shp</span><span class="btn fb">Parcourir</span></div>
    <div class="chk-row"><span class="cbx"></span><span>Ajouter le résultat au canevas</span></div>
    <div class="dlg-foot"><div class="progress"><i class="chunk"></i><span>0%</span></div><span class="btn fb ok">OK</span><span class="btn fb">Fermer</span></div>
  </div>
</div>

<svg class="marks" viewBox="0 0 1920 1029">
  <g class="redl">
    <path d="M699 279C699 261 776 249 957 249S1215 261 1215 279 1138 309 957 309 699 297 699 279Z"/>
    <path d="M694 330C694 314 773 304 956 304S1218 314 1218 330 1139 356 956 356 694 346 694 330Z"/>
    <path d="M702 568.700C702 550.700 772 538.700 937 538.700S1172 550.700 1172 568.700 1102 598.700 937 598.700 702 586.700 702 568.700Z"/>
    <path d="M706 630C706 611 777 598 944 598S1182 611 1182 630 1111 662 944 662 706 649 706 630Z"/>
    <path d="M708 701.700C708 679.700 782 664.700 955 664.700S1202 679.700 1202 701.700 1128 738.700 955 738.700 708 723.700 708 701.700Z"/>
    <ellipse cx="1000" cy="787.500" rx="68" ry="30"/>
    <path d="M1216 278H1589M1219 328.500H1589M1172 573H1594M1182 630H1594M1203 701.700 1595 840M640 809.300H930"/>
  </g>
</svg>
<div class="note n1">Nom de la couche<br>avec des polygones</div>
<div class="note n2">Nom de la couche<br>avec des points</div>
<div class="note n3">Type d'agrégation</div>
<div class="note n4">Nom du nouveau<br>champ</div>
<div class="note n5">Q-GIS crée un<br>nouveau fichier qu'il<br>faut nommer</div>
<div class="note n6">Cliquer sur "OK"<br>pour valider</div>
</body>
</html>
```
FILE: styles.css
```css
*{box-sizing:border-box}
html,body{margin:0;padding:0}
body{position:relative;width:1920px;height:1029px;overflow:hidden;display:flex;flex-direction:column;background:#f0f0f0;color:#000;font:12px/16px "Noto Sans","Open Sans",sans-serif}
.defs{position:absolute}
.svt,.svb{font-family:"Liberation Sans",sans-serif;font-weight:700}
.svs{font-family:"Liberation Serif",serif}
.svm{font-family:"Liberation Mono",monospace;font-weight:700}

.titlebar{height:30px;background:#fff;display:flex;justify-content:space-between;align-items:center;padding:0 3px 3px 0}
.title-left{display:flex;align-items:center;padding-left:3px}
.app-ico{width:20px;height:22px;margin-right:4px}
.app-title{font:14px/20px "Open Sans",sans-serif;color:#999}
.winctl{display:flex}
.winbtn{width:58.500px;display:flex;justify-content:center}
.w12{width:12px;height:12px}

.menubar{height:25px;display:flex;align-items:center;padding:1px 0 0 2px;border-bottom:1px solid #b9b9b9;background:#efefef}
.mi{padding:0 7.600px;white-space:nowrap}

.toolbar{height:39px;display:flex;align-items:center;padding-left:5px;border-bottom:1px solid #bcbcbc;background:#efefef}
.toolbar:last-of-type{border-bottom-width:2px}
.grip{width:6px;height:30px;margin-left:8px;flex:none;background:radial-gradient(circle,#c9c9c9 1px,transparent 1.300px) 0 0/3px 3px}
.grip.first{margin-left:0}
.t{width:35px;height:33px;flex:none;display:flex;align-items:center;justify-content:center}
.t svg{width:26px;height:26px}
.t.on{background:#d8d8d8;border:1px solid #8f8f8f;border-radius:3px}
.arr{width:15px;height:10px;flex:none;position:relative;display:block}
.arr::after{content:"";position:absolute;left:2px;top:2px;border:5px solid transparent;border-top:6px solid #000;border-bottom:0}
.arr.dis::after{border-top-color:#aaa}
.arr.abs{position:absolute;right:2px;top:10px}

.main{flex:1;display:flex;min-height:0}
.strip{width:55px;flex:none;border-right:1px solid #bbb;padding-top:6px;display:flex;flex-direction:column;align-items:center}
.hgrip{display:block;height:4px;background:radial-gradient(circle,#cfcfcf 1px,transparent 1.300px) 0 0/3px 3px}
.hgrip.top{width:48px;flex:none}
.hgrip.mid{width:48px;flex:none;margin:7px 0 4px}
.s{width:54px;height:30px;flex:none;margin-bottom:4.300px;display:flex;justify-content:center;align-items:center;position:relative}
.s svg{width:25px;height:25px}

.docks{width:317px;flex:none;padding:0 0 0 1px}
.vgrip{width:6px;flex:none;margin-top:285px;height:285px;background:radial-gradient(circle,#d0d0d0 1px,transparent 1.300px) 1px 0/3px 3px}
.dock-head{height:22px;display:flex;align-items:center;gap:8px;padding-left:2px}
.dots{flex:1;height:6px;background:radial-gradient(circle,#d2d2d2 1px,transparent 1.300px) 0 0/3px 3px}
.dock-title{white-space:nowrap;font-size:11.500px}
.dbtn{width:14px;height:14px;flex:none;border:1px solid #7f7f7f;border-radius:3px;background:#f6f6f6;margin-left:-4px;margin-right:-1px;display:flex}
.dbtn + .dbtn{margin-left:-5px;margin-right:2px}
.dbtn svg{width:12px;height:12px}
.dock-tools{height:38px;display:flex;align-items:center;padding:0 0 8px 1px}
.d{width:27.300px;height:24px;flex:none;display:flex;align-items:center;justify-content:center}
.d svg{width:20px;height:20px}
.d.narrow{width:24px}
.arr.small{width:17px}
.tree{background:#fff;border:1px solid #bdbdbd;border-radius:2px}
.browser{height:105px;display:flex;overflow:hidden}
.tree-rows{flex:1;min-width:0}
.row{height:17.500px;display:flex;align-items:center;padding-left:6px;white-space:nowrap}
.row.last{margin-top:2.500px}
.exp{width:9px;height:9px;border:1px solid #999;margin-right:8px;position:relative;flex:none}
.exp::after{content:"";position:absolute;left:1px;top:3px;width:5px;height:1px;background:#666}
.exp::before{content:"";position:absolute;left:3px;top:1px;width:1px;height:5px;background:#666}
.twig{width:17px;height:1px;flex:none;border-top:1px dotted #999;margin-left:5px;margin-right:-5px}
.ri{width:20px;height:20px;margin-right:2px;flex:none;margin-left:-1px}
.ri.wide{width:24px;margin-right:3px}
.vscroll{width:17px;margin:1px 2px 0 0;display:flex;flex-direction:column;flex:none}
.sb-btn{height:17px;border:1px solid #888;border-radius:3px;background:linear-gradient(#fafafa,#dcdcdc);position:relative;flex:none}
.sb-btn.up::after,.sb-btn.down::after{content:"";position:absolute;left:3px;top:5px;border:4px solid transparent}
.sb-btn.up::after{border-bottom:5px solid #000;border-top:0}
.sb-btn.down::after{border-top:5px solid #000;border-bottom:0}
.sb-thumb{height:26px;border:1px solid #aaa;border-radius:2px;background:#f7f7f7;flex:none}
.sb-track{flex:1;background:repeating-conic-gradient(#e4e4e4 0 25%,#fff 0 50%) 0 0/2px 2px}
.hgrip.split{height:8px;width:105px;margin:0 auto;background-position:0 2px;background-repeat:repeat}
.hgrip.split.second{height:7px}
.layers-tools{height:37px;padding-bottom:12px}
.layers{height:195px}
.lr{height:18.400px}
.lr:first-child{margin-top:-2px}
.lname{font-weight:700;font-size:13px}
.ul{text-decoration:underline;margin-left:1px}
.lname.c{margin-left:11px}
.lname.d2{margin-left:6px}
.cbx{width:15px;height:15px;flex:none;display:block;position:relative;background:#fff;border:1px solid #aaa;border-radius:1px}
.cbx::before,.cbx::after{content:"";position:absolute;left:0;top:5px;width:13px;height:3.200px;background:#000}
.cbx::before{transform:rotate(45deg)}
.cbx::after{transform:rotate(-45deg)}
.pt{width:10px;height:10px;border-radius:50%;background:#d66fe6;border:1px solid #333;margin-left:12px}
.sq{width:18px;height:18px;background:#54b36d;border:1px solid #222;margin-left:7px}
.route{padding:10px 9px 0 8px;display:flex;flex-direction:column}
.rlab{height:16px;line-height:16px}
.rlab.two{margin-top:10px}
.rrow{display:flex;gap:7px;align-items:center;height:29px;margin-top:2px}
.inp{background:#fff;border:1px solid #c2c2c2;border-radius:3px;height:21px;line-height:19px;padding:0 3px;display:block;white-space:nowrap;overflow:hidden}
.grow{flex:1}
.pickbtn{width:30px;height:29px;border:1px solid #8f8f8f;border-radius:3px;background:linear-gradient(#f4f4f4,#e6e6e6);display:flex;align-items:center;justify-content:center;flex:none}
.pickbtn svg{width:20px;height:20px}
.rline{display:flex;align-items:center;gap:5px;height:21px;margin-top:8px}
.crit{justify-content:space-between;margin-top:8.500px}
.combo{display:flex;background:linear-gradient(#f5f5f5,#dedede);border:1px solid #c0c0c0;border-radius:3px;height:21px;line-height:19px}
.cval{flex:1;padding-left:4px;min-width:0;white-space:nowrap;overflow:hidden}
.cdrop{width:16px;flex:none;border-left:1px solid #c0c0c0;position:relative}
.cdrop::after{content:"";position:absolute;left:3px;top:7px;border:4px solid transparent;border-top:5px solid #000;border-bottom:0}
.rcombo{width:147px}
.rbtns{display:flex;gap:10.500px;margin-top:9.500px}
.btn{flex:1;height:27px;line-height:25px;text-align:center;border:1px solid #bababa;border-radius:3px;background:linear-gradient(#f7f7f7,#dfdfdf);display:block}
.wide-btn{flex:none;height:31px;line-height:29px;margin-top:9.500px;display:flex;align-items:center;justify-content:center;gap:3px}
.wide-btn svg{width:21px;height:21px}

.canvas{flex:1;position:relative;background:#fff;border:2px solid #bbb;border-right-width:1px;border-bottom-width:1px;border-radius:2px;overflow:hidden;min-width:0}
.map{position:absolute;left:0;top:0;width:1540px;height:860px}
.land{fill:#54b36d;stroke:#000;stroke-width:1.200;stroke-linejoin:round}
.borders path{fill:none;stroke:#000;stroke-width:1.300}
.pts circle{fill:#d66fe6;stroke:#222;stroke-width:1}

.status{height:34px;flex:none;display:flex;align-items:center;position:relative}
.st-l{white-space:nowrap;flex:none}
.emprise{margin-left:981px;width:59px}
.st-ext{width:295px;text-align:center;flex:none;letter-spacing:.5px}
.st-lock{width:19px;height:29px;margin-left:3px;border:1px solid #888;border-radius:3px;background:#d8d8d8;display:flex;align-items:center;justify-content:center;flex:none}
.st-lock svg{width:15px;height:24px}
.echelle{margin-left:9px;width:53px}
.st-scale{width:97px;flex:none}
.white{background:#fff;border-radius:3px 0 0 3px}
.rot{margin-left:10px;width:57px}
.spin{width:106px;height:27px;flex:none;display:flex;background:#fff;border:1px solid #c2c2c2;border-radius:3px}
.spin-v{flex:1;padding:5px 0 0 3px}
.spin-b{width:14px;display:flex;flex-direction:column;background:#efefef;border-left:1px solid #ddd}
.sb-a{flex:1;position:relative;display:block}
.sb-a::after{content:"";position:absolute;left:3px;top:4px;border:4px solid transparent}
.sb-a.up::after{border-bottom:5px solid #222;border-top:0}
.sb-a.down::after{border-top:5px solid #222;border-bottom:0}
.st-c{margin-left:8px}
.rendu{margin-left:6px;width:51px}
.st-ico{width:20px;height:20px;flex:none}
.earth{margin-left:2px}
.epsg{margin-left:5px;width:86px}
.msg{width:24px;height:24px}

.dialog{position:absolute;left:761px;top:211px;width:398px;height:600px;background:#efefef;border:1px solid #7a7a7a;box-shadow:0 4px 22px rgba(0,0,0,.55)}
.dlg-title{height:37px;background:#fff;display:flex;align-items:center;padding:0 0 2px 8px}
.dlg-ico{width:19px;height:21px;margin-right:7px}
.dlg-name{font:14px/20px "Open Sans",sans-serif;letter-spacing:.07px;width:271px;white-space:nowrap;color:#111}
.dlg-help{font:15px/20px "Open Sans",sans-serif;width:54px}
.dlg-x{width:13px;height:13px}
.dlg-body{padding:0 11px;display:flex;flex-direction:column}
.dl{height:16px;line-height:16px;margin-top:7px;margin-bottom:5px;white-space:nowrap}
.dl.first{margin-top:11px}
.dc{height:22px;line-height:20px;flex:none}
.list{height:170px;flex:none;background:#fff;border:1px solid #c2c2c2;border-radius:3px;padding:0 4px}
.dl.l4{margin-top:6px;margin-bottom:6px}
.dl.l5{margin-top:6px}
.di{height:22px;line-height:20px;padding-left:3px;flex:none}
.dl.l6{margin-top:29px;margin-bottom:8px}
.file-row{display:flex;align-items:center;justify-content:space-between;height:28px}
.file{width:270px}
.fb{flex:none;width:93px;height:28px;line-height:26px;display:block}
.chk-row{display:flex;align-items:center;gap:6px;height:16px;margin-top:11px}
.dlg-foot{display:flex;align-items:center;gap:11px;height:28px;margin-top:14px}
.progress{width:167px;height:24px;background:#fff;border:1px solid #8f8f8f;border-radius:3px;position:relative;text-align:center;font-weight:700;line-height:22px}
.chunk{position:absolute;left:1px;top:1px;bottom:1px;width:3px;background:#2a7fd5}
.ok{border-color:#7a7a7a}

.marks{position:absolute;left:0;top:0;width:1920px;height:1029px;pointer-events:none}
.redl ellipse,.redl path{fill:none;stroke:#ed1c24;stroke-width:4.500;stroke-linecap:round}
.note{position:absolute;font:31.900px/38px "Liberation Sans",Arial,sans-serif;color:#ed1c24;white-space:nowrap}
.n1{left:1605px;top:216px}
.n2{left:1605px;top:309px}
.n3{left:1610px;top:558px}
.n4{left:1611px;top:608px}
.n5{left:1609px;top:821px}
.n6{left:393px;top:784px}
```
